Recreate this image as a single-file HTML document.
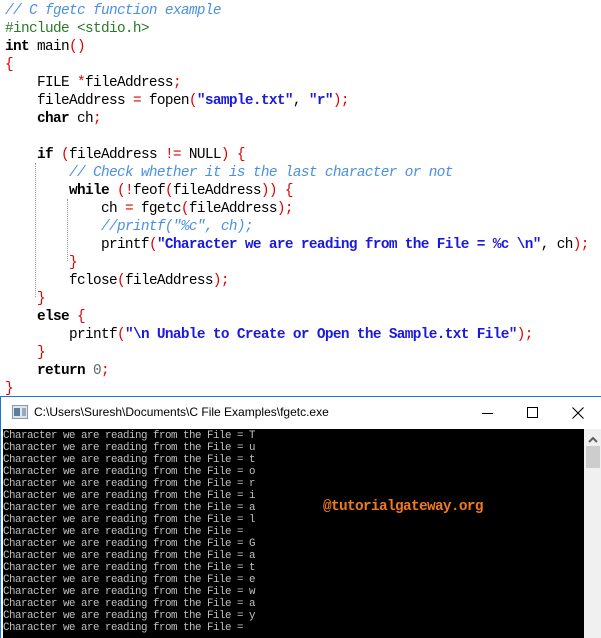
<!DOCTYPE html>
<html><head><style>
body{margin:0;width:601px;height:637px;background:#fff;overflow:hidden;position:relative}
#code{position:absolute;left:5px;top:2px;font-family:"Liberation Mono",monospace;font-size:14.4px;letter-spacing:-0.64px;line-height:18px;white-space:pre;color:#000}
.c{color:#4a90e2;font-style:italic}
.g{color:#2a7a2a}
.k{font-weight:bold}
.r{color:#e00000}
.s{color:#1a1adc;font-weight:bold}
.n{color:#666}
.guide{position:absolute;border-left:1px dotted #999;width:0}
#win{position:absolute;left:0;top:396px;width:601px;height:241px;border-top:1px solid #1c78d6;border-left:1px solid #1c78d6;background:#fff}
#title{position:absolute;left:33px;top:8px;font-family:"Liberation Sans",sans-serif;font-size:12px;color:#000}
#con{position:absolute;left:2px;top:32px;width:581px;height:209px;padding-top:1px;box-sizing:border-box;background:#000;font-family:"Liberation Mono",monospace;font-size:10.8px;letter-spacing:-0.48px;line-height:12px;color:#c0c0c0;white-space:pre;overflow:hidden}
#sb{position:absolute;left:583px;top:32px;width:18px;height:209px;background:#f0f0f0}
#wm{position:absolute;left:320px;top:72px;color:#f07a1e;font-weight:bold;font-size:14.4px;letter-spacing:-0.64px;font-family:"Liberation Mono",monospace}
</style></head><body>
<div class="guide" style="left:35px;top:163px;height:134px"></div>
<div class="guide" style="left:67px;top:199px;height:62px"></div>
<div id="code"><span class="c">// C fgetc function example</span>
<span class="g">#include &lt;stdio.h&gt;</span>
<span class="k">int</span> main<span class="r">()</span>
<span class="r">{</span>
    FILE <span class="r">*</span>fileAddress<span class="r">;</span>
    fileAddress <span class="r">=</span> fopen<span class="r">(</span><span class="s">"sample.txt"</span>, <span class="s">"r"</span><span class="r">);</span>
    <span class="k">char</span> ch<span class="r">;</span>

    <span class="k">if</span> <span class="r">(</span>fileAddress <span class="r">!=</span> NULL<span class="r">)</span> <span class="r">{</span>
        <span class="c">// Check whether it is the last character or not</span>
        <span class="k">while</span> <span class="r">(!</span>feof<span class="r">(</span>fileAddress<span class="r">))</span> <span class="r">{</span>
            ch <span class="r">=</span> fgetc<span class="r">(</span>fileAddress<span class="r">);</span>
            <span class="c">//printf("%c", ch);</span>
            printf<span class="r">(</span><span class="s">"Character we are reading from the File = %c \n"</span>, ch<span class="r">);</span>
        <span class="r">}</span>
        fclose<span class="r">(</span>fileAddress<span class="r">);</span>
    <span class="r">}</span>
    <span class="k">else</span> <span class="r">{</span>
        printf<span class="r">(</span><span class="s">"\n Unable to Create or Open the Sample.txt File"</span><span class="r">);</span>
    <span class="r">}</span>
    <span class="k">return</span> <span class="n">0</span><span class="r">;</span>
<span class="r">}</span></div>
<div id="win">
<svg style="position:absolute;left:11px;top:8px" width="16" height="14"><rect x="0.5" y="0.5" width="15" height="13" fill="#dfe6ee" stroke="#8a9aa8"/><rect x="2" y="3" width="6" height="8" fill="#5a7f9a"/><rect x="10" y="3" width="4" height="8" fill="#9ab"/></svg>
<div id="title">C:\Users\Suresh\Documents\C File Examples\fgetc.exe</div>
<div style="position:absolute;left:481px;top:16px;width:11px;height:1px;background:#000"></div>
<div style="position:absolute;left:526px;top:10px;width:9px;height:9px;border:1px solid #000"></div>
<svg style="position:absolute;left:571px;top:10px" width="12" height="12"><path d="M0.5 0.5L11.5 11.5M11.5 0.5L0.5 11.5" stroke="#000" stroke-width="1.1"/></svg>
<div id="con">Character we are reading from the File = T
Character we are reading from the File = u
Character we are reading from the File = t
Character we are reading from the File = o
Character we are reading from the File = r
Character we are reading from the File = i
Character we are reading from the File = a
Character we are reading from the File = l
Character we are reading from the File =  
Character we are reading from the File = G
Character we are reading from the File = a
Character we are reading from the File = t
Character we are reading from the File = e
Character we are reading from the File = w
Character we are reading from the File = a
Character we are reading from the File = y
Character we are reading from the File = <div id="wm">@tutorialgateway.org</div></div>
<div id="sb">
<svg style="position:absolute;left:4px;top:7px" width="10" height="7"><path d="M1 6L5 2L9 6" stroke="#606060" stroke-width="2" fill="none"/></svg>
<div style="position:absolute;left:2px;top:17px;width:14px;height:22px;background:#cdcdcd"></div>
</div>
</div>
</body></html>
